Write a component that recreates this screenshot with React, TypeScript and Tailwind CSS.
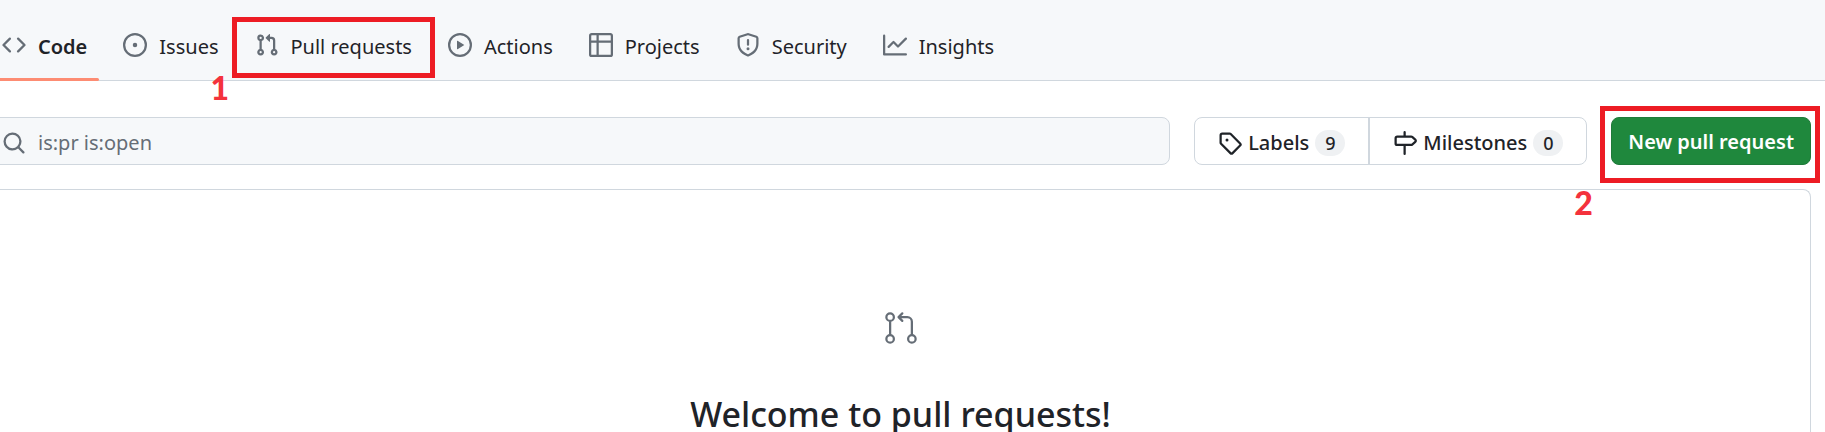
import type { ReactNode } from "react";
import { GoGitPullRequest } from "react-icons/go";

const ICONS = {
  code: "M4.72 3.22a.75.75 0 0 1 1.06 1.06L2.06 8l3.72 3.72a.75.75 0 1 1-1.06 1.06L.47 8.53a.75.75 0 0 1 0-1.06l4.25-4.25zm6.56 0a.75.75 0 1 0-1.06 1.06L13.94 8l-3.72 3.72a.75.75 0 1 0 1.06 1.06l4.25-4.25a.75.75 0 0 0 0-1.06l-4.25-4.25z",
  issue: "M8 9.5a1.5 1.5 0 1 0 0-3 1.5 1.5 0 0 0 0 3ZM8 0a8 8 0 1 1 0 16A8 8 0 0 1 8 0ZM1.5 8a6.5 6.5 0 1 0 13 0 6.5 6.5 0 0 0-13 0Z",
  pull: "M1.5 3.25a2.25 2.25 0 1 1 3 2.122v5.256a2.251 2.251 0 1 1-1.5 0V5.372A2.25 2.25 0 0 1 1.5 3.25Zm5.677-.177L9.573.677A.25.25 0 0 1 10 .854V2.5h1A2.5 2.5 0 0 1 13.5 5v5.628a2.251 2.251 0 1 1-1.5 0V5a1 1 0 0 0-1-1h-1v1.646a.25.25 0 0 1-.427.177L7.177 3.427a.25.25 0 0 1 0-.354ZM3.75 2.5a.75.75 0 1 0 0 1.5.75.75 0 0 0 0-1.5Zm0 9.5a.75.75 0 1 0 0 1.5.75.75 0 0 0 0-1.5Zm8.25.75a.75.75 0 1 0 1.5 0 .75.75 0 0 0-1.5 0Z",
  play: "M8 0a8 8 0 1 1 0 16A8 8 0 0 1 8 0ZM1.5 8a6.5 6.5 0 1 0 13 0 6.5 6.5 0 0 0-13 0Zm4.879-2.773 4.264 2.559a.25.25 0 0 1 0 .428l-4.264 2.559A.25.25 0 0 1 6 10.559V5.442a.25.25 0 0 1 .379-.215Z",
  table: "M0 1.75C0 .784.784 0 1.75 0h12.5C15.216 0 16 .784 16 1.75v12.5A1.75 1.75 0 0 1 14.25 16H1.75A1.75 1.75 0 0 1 0 14.25ZM6.5 6.5v8h7.75a.25.25 0 0 0 .25-.25V6.5Zm8-1.5V1.75a.25.25 0 0 0-.25-.25H6.5V5Zm-13 1.5v7.75c0 .138.112.25.25.25H5v-8ZM5 5V1.5H1.75a.25.25 0 0 0-.25.25V5Z",
  shield: "M7.467.133a1.748 1.748 0 0 1 1.066 0l5.25 1.68A1.75 1.75 0 0 1 15 3.48V7c0 1.566-.32 3.182-1.303 4.682-.983 1.498-2.585 2.813-5.032 3.855a1.697 1.697 0 0 1-1.33 0c-2.447-1.042-4.049-2.357-5.032-3.855C1.32 10.182 1 8.566 1 7V3.48a1.75 1.75 0 0 1 1.217-1.667Zm.61 1.429a.25.25 0 0 0-.153 0l-5.25 1.68a.25.25 0 0 0-.174.238V7c0 1.358.275 2.666 1.057 3.86.784 1.194 2.121 2.34 4.366 3.297a.196.196 0 0 0 .154 0c2.245-.956 3.582-2.104 4.366-3.298C13.225 9.666 13.5 8.36 13.5 7V3.48a.251.251 0 0 0-.174-.237l-5.25-1.68ZM8.75 4.75v3a.75.75 0 0 1-1.5 0v-3a.75.75 0 0 1 1.5 0ZM9 10.5a1 1 0 1 1-2 0 1 1 0 0 1 2 0Z",
  graph: "M1.5 1.75V13.5h13.75a.75.75 0 0 1 0 1.5H.75a.75.75 0 0 1-.75-.75V1.75a.75.75 0 0 1 1.5 0Zm14.28 2.53-5.25 5.25a.75.75 0 0 1-1.06 0L7 7.06 4.28 9.78a.751.751 0 0 1-1.042-.018.751.751 0 0 1-.018-1.042l3.25-3.25a.75.75 0 0 1 1.06 0L10 7.94l4.72-4.72a.751.751 0 0 1 1.042.018.751.751 0 0 1 .018 1.042Z",
  search: "M10.68 11.74a6 6 0 0 1-7.922-8.982 6 6 0 0 1 8.982 7.922l3.04 3.04a.749.749 0 0 1-.326 1.275.749.749 0 0 1-.734-.215ZM11.5 7a4.499 4.499 0 1 0-8.997 0A4.499 4.499 0 0 0 11.5 7Z",
  tag: "M1 7.775V2.75C1 1.784 1.784 1 2.75 1h5.025c.464 0 .91.184 1.238.513l6.25 6.25a1.75 1.75 0 0 1 0 2.474l-5.026 5.026a1.75 1.75 0 0 1-2.474 0l-6.25-6.25A1.752 1.752 0 0 1 1 7.775Zm1.5 0c0 .066.026.13.073.177l6.25 6.25a.25.25 0 0 0 .354 0l5.025-5.025a.25.25 0 0 0 0-.354l-6.25-6.25a.25.25 0 0 0-.177-.073H2.75a.25.25 0 0 0-.25.25ZM6 5a1 1 0 1 1 0 2 1 1 0 0 1 0-2Z",
  milestone: "M7.75 0a.75.75 0 0 1 .75.75V3h3.634c.414 0 .814.147 1.13.414l2.07 1.75a1.75 1.75 0 0 1 0 2.672l-2.07 1.75a1.75 1.75 0 0 1-1.13.414H8.5v5.25a.75.75 0 0 1-1.5 0V10H2.75A1.75 1.75 0 0 1 1 8.25v-3.5C1 3.784 1.784 3 2.75 3H7V.75A.75.75 0 0 1 7.75 0Zm4.384 8.5a.25.25 0 0 0 .161-.06l2.07-1.75a.248.248 0 0 0 0-.38l-2.07-1.75a.25.25 0 0 0-.161-.06H2.75a.25.25 0 0 0-.25.25v3.5c0 .138.112.25.25.25h9.384Z",
};

type IconName = keyof typeof ICONS;

function Icon({ name, className = "" }: { name: IconName; className?: string }) {
  return (
    <svg viewBox="0 0 16 16" fill="currentColor" fillRule="evenodd" aria-hidden="true" className={`size-6 shrink-0 ${className}`}>
      <path d={ICONS[name]} />
    </svg>
  );
}

const TABS: { label: string; icon: IconName }[] = [
  { label: "Code", icon: "code" },
  { label: "Issues", icon: "issue" },
  { label: "Pull requests", icon: "pull" },
  { label: "Actions", icon: "play" },
  { label: "Projects", icon: "table" },
  { label: "Security", icon: "shield" },
  { label: "Insights", icon: "graph" },
];

function Step({ children, className }: { children: ReactNode; className: string }) {
  return (
    <span className={`pointer-events-none absolute font-['Lato',sans-serif] text-[32px] leading-8 font-black text-[#f4323c] ${className}`}>
      {children}
    </span>
  );
}

function Tab({ label, icon }: { label: string; icon: IconName }) {
  const active = label === "Code";
  return (
    <a href="#" aria-current={active ? "page" : undefined} className="relative flex h-full items-center gap-3 px-3">
      <Icon name={icon} className="text-[#656d76]" />
      <span className={active ? "pt-[3px] font-semibold" : "pt-[3px]"}>{label}</span>
      {active && <span className="absolute inset-x-0 -bottom-px h-[3px] rounded-full bg-[#fd8c73]" />}
      {label === "Pull requests" && (
        <>
          <span className="pointer-events-none absolute inset-x-[-11px] top-[7px] bottom-[2px] border-[5px] border-[#ed1c24]" />
          <Step className="-left-8 top-[62px]">1</Step>
        </>
      )}
    </a>
  );
}

function Counter({ children }: { children: ReactNode }) {
  return <span className="flex h-[26px] min-w-[30px] items-center justify-center rounded-full bg-[#eff1f3] px-2 text-lg">{children}</span>;
}

export default function App() {
  return (
    <div className="flex h-screen flex-col overflow-hidden bg-white font-['Noto_Sans',sans-serif] text-xl text-[#1f2328]">
      <nav aria-label="Repository" className="-ml-[10px] flex h-[81px] shrink-0 items-end gap-3 border-b border-[#d0d7de] bg-[#f6f8fa] pt-[10px]">
        {TABS.map((tab) => (
          <Tab key={tab.label} {...tab} />
        ))}
      </nav>

      <main className="-ml-[10px] flex grow flex-col pt-9 pr-[14px]">
        <div className="flex h-12 shrink-0 items-stretch gap-6">
          <label className="flex grow items-center gap-3 rounded-lg border border-[#d0d7de] bg-[#f6f8fa] pt-[3px] pl-[11px] text-[#656d76]">
            <Icon name="search" />
            <input aria-label="Search pull requests" defaultValue="is:pr is:open" className="min-w-0 grow bg-transparent outline-none" />
          </label>

          <div className="flex divide-x-2 divide-[#d0d7de] rounded-lg border border-[#d0d7de] font-medium">
            <a href="#" className="flex items-center gap-[6px] px-[23px] pt-[3px]">
              <Icon name="tag" />
              Labels
              <Counter>9</Counter>
            </a>
            <a href="#" className="flex items-center gap-[6px] px-[23px] pt-[3px]">
              <Icon name="milestone" />
              Milestones
              <Counter>0</Counter>
            </a>
          </div>

          <div className="relative flex">
            <button type="button" className="rounded-lg border border-[#1f7a3a] bg-[#1f883d] px-4 pt-px font-semibold text-white">
              New pull request
            </button>
            <span className="pointer-events-none absolute -top-[11px] -right-[9px] -bottom-[18px] -left-[11px] border-[5px] border-[#ed1c24]" />
            <Step className="top-[70px] -left-[37px]">2</Step>
          </div>
        </div>

        <section className="mt-6 flex grow flex-col items-center rounded-t-lg border border-b-0 border-[#d0d7de] pt-30">
          <GoGitPullRequest aria-hidden="true" className="size-9 shrink-0 text-[#656d76]" />
          <h1 className="mt-11 text-[34px] leading-12 font-medium whitespace-nowrap">Welcome to pull requests!</h1>
        </section>
      </main>
    </div>
  );
}
